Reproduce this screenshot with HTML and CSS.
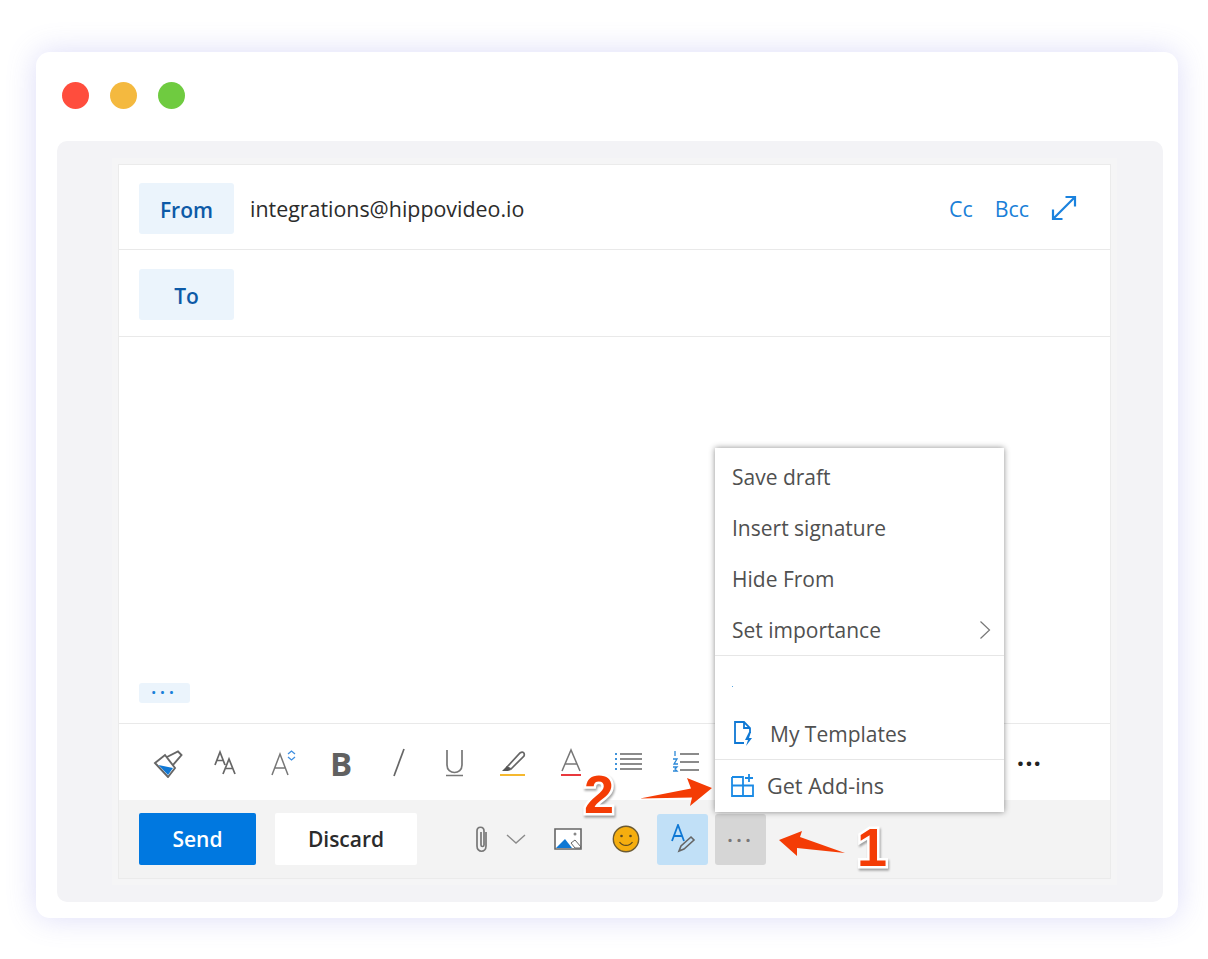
FILE: index.html
```html
<!DOCTYPE html>
<html lang="en">
<head>
<meta charset="utf-8">
<title>Compose</title>
<link rel="stylesheet" href="styles.css">
</head>
<body>
<div class="window">
  <div class="lights"><span class="light red"></span><span class="light amber"></span><span class="light green"></span></div>
  <div class="panel">
    <div class="compose">
      <div class="row">
        <div class="tag">From</div>
        <div class="addr">integrations@hippovideo.io</div>
        <div class="links">
          <span>Cc</span><span>Bcc</span>
          <svg class="expand" width="26" height="26" viewBox="0 0 26 26" fill="none" stroke="#1a82de" stroke-width="2.200"><path d="M2 24 24 2M14.500 2H24V11.500M2 14.500V24H11.500"/></svg>
        </div>
      </div>
      <div class="row row-to"><div class="tag">To</div></div>
      <div class="body"><div class="more-pill">···</div></div>
      <div class="toolbar">
        <svg class="ico" viewBox="0 0 30 30" fill="none" stroke="#666" stroke-width="1.900"><path d="M2 15 12 7 22 20 15 29z" fill="#fff"/><path d="M5.500 17 20 20 15 27z" fill="#0f78d4" stroke="none"/><path d="M14 9 25 3.500 28.500 7 20 17"/></svg>
        <svg class="ico" viewBox="0 0 30 30" fill="none" stroke="#666" stroke-width="1.700"><path d="M4 17 9 4l5 13M6 12.500h6M12 26l6-15 6 15M14.500 20.500h7"/></svg>
        <svg class="ico" viewBox="0 0 30 30" fill="none"><path d="M4 27 12 6l8 21M7 20h10" stroke="#777" stroke-width="1.500"/><path d="M20 6l3.500-3L27 6M20 9l3.500 3L27 9" stroke="#3f8fe0" stroke-width="1.300"/></svg>
        <span class="ico glyph bold">B</span>
        <svg class="ico" viewBox="0 0 30 30" fill="none" stroke="#666" stroke-width="1.700"><path d="M20 1 10 28"/></svg>
        <svg class="ico" viewBox="0 0 30 30" fill="none" stroke="#777" stroke-width="1.700"><path d="M6 2v15c0 10 15 10 15 0V2M5 27.500h17"/></svg>
        <svg class="ico" viewBox="0 0 30 30" fill="none"><path d="M8 19 21 5c3-2 5 0 4 3L12 21z" stroke="#666" stroke-width="1.700"/><path d="M8 18l4 4-3 1H3z" fill="#555"/><path d="M1 27h25" stroke="#f5b82e" stroke-width="2"/></svg>
        <svg class="ico" viewBox="0 0 30 30" fill="none"><path d="M5 23 14 2l9 21M8 16h12" stroke="#777" stroke-width="1.500"/><path d="M4 27h20" stroke="#e8383d" stroke-width="2"/></svg>
        <svg class="ico" viewBox="0 0 30 30" fill="none"><path d="M5 6h22M5 11h22M5 16h22M5 21h22" stroke="#666" stroke-width="1.600"/><path d="M1 5v2M1 10v2M1 15v2M1 20v2" stroke="#2b88d8" stroke-width="1.800"/></svg>
        <svg class="ico" viewBox="0 0 30 30" fill="none"><path d="M8 6h19M8 14h19M8 22h19" stroke="#666" stroke-width="1.600"/><path d="M3 3v5M1 11h4l-3 5h4M1 19h4l-2 2 2 2H1" stroke="#2b88d8" stroke-width="1.300"/></svg>
        <span class="tool-more">···</span>
      </div>
      <div class="actions">
        <button class="btn send">Send</button>
        <button class="btn discard">Discard</button>
        <svg class="clip" width="18" height="28" viewBox="0 0 18 28" fill="none" stroke="#777" stroke-width="1.700"><path d="M13 7v14c0 7-9 7-9 0V6c0-5 7-5 7 0v14c0 2-3 2-3 0V7"/></svg>
        <svg class="chev" width="20" height="12" viewBox="0 0 20 12" fill="none" stroke="#8a8a8a" stroke-width="1.400"><path d="M1 2l9 8 9-8"/></svg>
        <svg class="pic" width="28" height="22" viewBox="0 0 28 22" fill="none"><path d="M1 1h26v20H1z" fill="#fff" stroke="#666" stroke-width="1.600"/><path d="M2 20l9-9 7 9z" fill="#0f78d4"/><path d="M17 15l4-3 6 7-1 1h-5z" fill="#fff" stroke="#666"/><circle cx="21" cy="6" r="1.500" fill="#888"/></svg>
        <svg class="smile" width="28" height="28" viewBox="0 0 28 28"><circle cx="14" cy="14" r="12.700" fill="#f5ae0f" stroke="#6b5a33" stroke-width="1.400"/><circle cx="9.500" cy="11" r="1.300" fill="#5c4a20"/><circle cx="18.500" cy="11" r="1.300" fill="#5c4a20"/><path d="M7.500 17c3 4.500 10 4.500 13 0" fill="none" stroke="#5c4a20" stroke-width="1.300"/></svg>
        <div class="square sign">
          <svg width="26" height="30" viewBox="0 0 26 30" fill="none"><path d="M2 17 8 1l6 16M4 12h8" stroke="#0f78d4" stroke-width="1.800"/><path d="M9 27l2-5 10-9 3 3-10 9z" stroke="#666" stroke-width="1.600"/></svg>
        </div>
        <div class="square dots">···</div>
      </div>
      <div class="menu">
        <div class="menu-item">Save draft</div>
        <div class="menu-item">Insert signature</div>
        <div class="menu-item">Hide From</div>
        <div class="menu-item importance">Set importance
          <svg width="12" height="20" viewBox="0 0 12 20" fill="none" stroke="#777" stroke-width="1.200"><path d="M1.500 1.500 10.500 10l-9 8.500"/></svg>
        </div>
        <div class="menu-sep"></div>
        <div class="menu-dot"></div>
        <div class="menu-item templates">
          <svg width="22" height="26" viewBox="0 0 22 26" fill="none"><path d="M11 22H2V1h9l6 6v5M11 1v6h6" stroke="#0f78d4" stroke-width="1.800"/><path d="M16 11l-4 8h3l-2 6 6-8h-3l2-6z" fill="#0f78d4"/></svg>
          My Templates
        </div>
        <div class="menu-sep"></div>
        <div class="menu-item addins">
          <svg width="23" height="23" viewBox="0 0 23 23" fill="none" stroke="#1a8ae5" stroke-width="1.800"><path d="M1 3h11v19M1 3v19h21V11.500H1M18 0v8M14 4h8"/></svg>
          Get Add-ins
        </div>
      </div>
    </div>
  </div>
</div>
<svg class="arrow arrow-two" width="76" height="32" viewBox="0 0 76 32"><path d="M1 22.500 52 12.500 48 2 73 12 51 30 53 21.500z" fill="#f43c05"/></svg>
<svg class="arrow arrow-one" width="70" height="32" viewBox="0 0 70 32"><path d="M0 11 23 2 21 8 66 24 18 19 18 27z" fill="#f43c05"/></svg>
<span class="callout callout-two">2</span>
<span class="callout callout-one">1</span>
</body>
</html>
```
FILE: styles.css
```css
* { box-sizing: border-box; }
html, body { margin: 0; height: 959px; overflow: hidden; }
body {
  position: relative;
  padding: 52px 30px 0 36px;
  background: #fff;
  font-family: "Open Sans", "Noto Sans", sans-serif;
  color: #333;
}
.window {
  width: 1142px;
  height: 866px;
  background: #fff;
  border-radius: 14px;
  padding: 0 15px 16px 21px;
  display: flex;
  flex-direction: column;
  box-shadow: 0 0 30px rgba(110, 110, 225, 0.24);
}
.lights { display: flex; gap: 21px; height: 89px; padding: 30px 0 0 5px; flex: none; }
.light { width: 27px; height: 27px; border-radius: 50%; }
.red { background: #ff4d3d; }
.amber { background: #f4b93f; }
.green { background: #6fcb40; }
.panel {
  flex: 1;
  background: #f3f3f6;
  border-radius: 10px;
  padding: 23px 52px 23px 61px;
  display: flex;
}
.compose {
  position: relative;
  flex: 1;
  background: #fff;
  border: 1px solid #ebebeb;
  box-shadow: 0 0 0 6px #f5f5f6;
  display: flex;
  flex-direction: column;
}
.row {
  height: 85px;
  flex: none;
  border-bottom: 1px solid #e9e9e9;
  display: flex;
  align-items: center;
  padding: 2px 33px 0 20px;
}
.row-to { height: 87px; }
.tag {
  width: 95px;
  height: 51px;
  background: #ebf4fc;
  border-radius: 3px;
  color: #0d5aa7;
  font-size: 21px;
  font-weight: 600;
  padding-top: 3px;
  display: flex;
  align-items: center;
  justify-content: center;
}
.addr { margin-left: 16px; font-size: 21.400px; color: #2b2b2b; }
.links { margin-left: auto; display: flex; align-items: center; gap: 22px; color: #1a7fd8; font-size: 21.400px; }
.expand { margin-left: 0; }
.body { flex: 1; border-bottom: 1px solid #e9e9e9; padding: 346px 0 0 20px; }
.more-pill {
  width: 51px;
  height: 20px;
  background: #ebf4fc;
  border-radius: 3px;
  color: #1a7fd8;
  font-size: 17px;
  line-height: 20px;
  font-weight: 700;
  text-align: center;
  letter-spacing: 4px;
}
.toolbar {
  height: 76px;
  flex: none;
  display: flex;
  align-items: center;
  padding: 2px 68px 0 34px;
  gap: 27.700px;
}
.ico { width: 30px; height: 30px; flex: none; }
.glyph { display: flex; align-items: center; justify-content: center; }
.bold { font: 700 33px "Open Sans", sans-serif; color: #616161; }
.tool-more { margin-left: auto; color: #222; font-size: 26px; font-weight: 700; letter-spacing: 1px; line-height: 1; }
.actions {
  height: 78px;
  flex: none;
  background: #f3f3f3;
  display: flex;
  align-items: center;
  padding: 0 0 0 20px;
}
.btn {
  height: 52px;
  border: 0;
  border-radius: 2px;
  font-family: inherit;
  font-size: 21px;
  font-weight: 600;
  padding: 0;
}
.send { width: 117px; background: #0078e0; color: #fff; }
.discard { width: 142px; margin-left: 19px; background: #fff; color: #2b2b2b; }
.clip { margin-left: 56px; }
.chev { margin-left: 15px; }
.pic { margin-left: 28px; }
.smile { margin-left: 30px; }
.square {
  width: 51px;
  height: 51px;
  border-radius: 3px;
  display: flex;
  align-items: center;
  justify-content: center;
}
.sign { margin-left: 17px; background: #c1e0f7; }
.dots { margin-left: 7px; background: #d6d6d6; color: #777; font-size: 22px; font-weight: 600; letter-spacing: 3px; }
.menu {
  position: absolute;
  left: 596px;
  top: 283px;
  width: 289px;
  height: 364px;
  background: #fff;
  box-shadow: 0 0 6px rgba(0, 0, 0, 0.45);
  padding-top: 3px;
  font-size: 21px;
  color: #505050;
  display: flex;
  flex-direction: column;
}
.menu-item { height: 51px; flex: none; display: flex; align-items: center; padding-left: 17px; }
.importance { justify-content: space-between; padding-right: 13px; }
.menu-sep { height: 1px; background: #e6e6e6; flex: none; }
.menu-dot { width: 1px; height: 1px; background: #5aa7e0; margin: 30px 0 0 17px; flex: none; }
.templates { margin-top: 21px; gap: 15px; padding-left: 18px; }
.addins { gap: 13px; padding-left: 16px; font-size: 21.600px; }
.arrow { position: absolute; }
.arrow-two { left: 639px; top: 776px; }
.arrow-one { left: 779px; top: 829px; }
.callout {
  position: absolute;
  font: 700 54px/1 "Liberation Sans", sans-serif;
  color: #f43c05;
  -webkit-text-stroke: 5px #fff;
  paint-order: stroke fill;
  filter: drop-shadow(1px 2px 1px rgba(0, 0, 0, 0.35));
}
.callout-two { left: 584px; top: 767px; }
.callout-one { left: 857px; top: 820px; }
```
